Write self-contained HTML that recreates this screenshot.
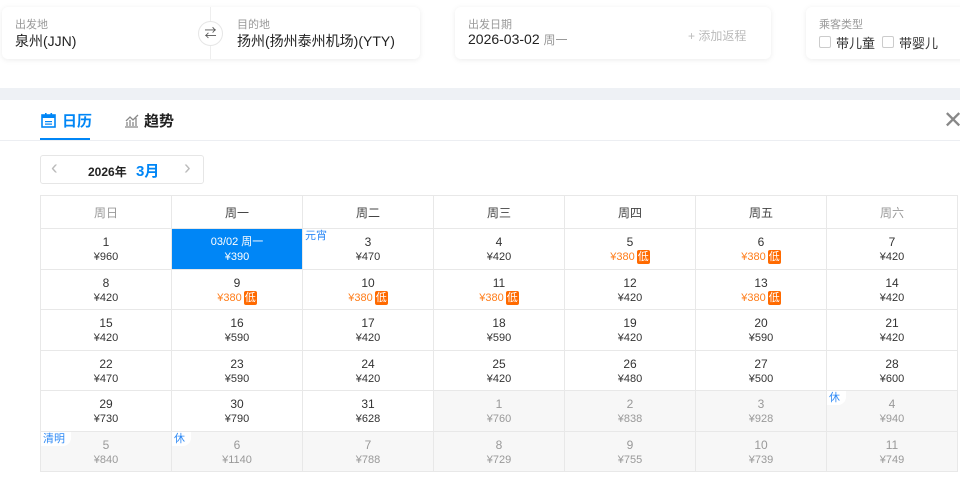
<!DOCTYPE html>
<html><head><meta charset="utf-8"><style>
*{margin:0;padding:0;box-sizing:border-box}
body{width:960px;height:478px;overflow:hidden;background:#fff;font-family:"Liberation Sans","Noto Sans CJK SC",sans-serif;position:relative;color:#333}
.card{position:absolute;background:#fff;border-radius:6px;box-shadow:0 1px 6px rgba(0,0,0,.08)}
.lbl{position:absolute;font-size:11px;color:#999}
.val{position:absolute;font-size:14px;color:#222}
.band{position:absolute;left:0;top:88px;width:960px;height:12px;background:#eef1f5}
.panel{position:absolute;left:0;top:100px;width:960px;height:378px;background:#fff}
table{position:absolute;left:40px;top:195px;border-collapse:collapse;table-layout:fixed}
td,th{width:131px;border:1px solid #e8e8e8;text-align:center;position:relative}
th{height:33px;font-weight:normal;font-size:12px;color:#444}
td{height:40.5px;font-size:12px;line-height:15px;color:#333;padding-top:6px;vertical-align:top}
td .p{font-size:11px;line-height:15px;color:#333}
td.o .p{color:#ff7d1a}
.low{display:inline-block;background:#ff6a00;color:#fff;font-size:11px;line-height:14px;padding:0 1px;border-radius:2px;margin-left:2px;vertical-align:top}
td.g{background:#f7f7f7;color:#999}
td.g .p{color:#999}
td.sel{background:#0086f6;color:#fff;font-size:11px}
td.sel .p{color:#fff}
.tag{position:absolute;left:0;top:0;background:#fff;color:#2f8af5;font-size:11px;line-height:14px;padding:0 6px 0 2px;border-radius:0 0 8px 0}
</style></head><body>
<div class="card" style="left:2px;top:7px;width:418px;height:52px">
 <div class="lbl" style="left:13px;top:9px">出发地</div>
 <div class="val" style="left:13px;top:24px">泉州(JJN)</div>
 <div style="position:absolute;left:208px;top:0;width:1px;height:52px;background:#eee"></div>
 <div style="position:absolute;left:196px;top:14px;width:25px;height:25px;border-radius:50%;background:#fff;border:1px solid #e6e6e6;font-size:12px;text-align:center;line-height:23px;color:#555">⇄</div>
 <div class="lbl" style="left:235px;top:9px">目的地</div>
 <div class="val" style="left:235px;top:24px">扬州(扬州泰州机场)(YTY)</div>
</div>
<div class="card" style="left:455px;top:7px;width:316px;height:52px">
 <div class="lbl" style="left:13px;top:9px">出发日期</div>
 <div class="val" style="left:13px;top:24px">2026-03-02 <span style="font-size:12px;color:#999">周一</span></div>
 <div style="position:absolute;left:233px;top:20px;font-size:12px;color:#bbb">+ 添加返程</div>
</div>
<div class="card" style="left:806px;top:7px;width:170px;height:52px">
 <div class="lbl" style="left:13px;top:9px">乘客类型</div>
 <div style="position:absolute;left:13px;top:29px;width:12px;height:12px;border:1px solid #ccc;border-radius:2px"></div>
 <div style="position:absolute;left:30px;top:26px;font-size:13px">带儿童</div>
 <div style="position:absolute;left:76px;top:29px;width:12px;height:12px;border:1px solid #ccc;border-radius:2px"></div>
 <div style="position:absolute;left:93px;top:26px;font-size:13px">带婴儿</div>
</div>
<div class="band"></div>
<div class="panel">
 <div style="position:absolute;left:0;top:40px;width:960px;height:1px;background:#eceef2"></div>
 <svg style="position:absolute;left:41px;top:13px" width="15" height="15" viewBox="0 0 15 15"><rect x="1" y="2" width="13" height="12" fill="none" stroke="#0086f6" stroke-width="1.6"/><rect x="1" y="2" width="13" height="3" fill="#0086f6"/><rect x="4" y="0" width="1.6" height="3" fill="#0086f6"/><rect x="9.5" y="0" width="1.6" height="3" fill="#0086f6"/><rect x="4" y="8" width="7" height="1.2" fill="#0086f6"/><rect x="4" y="10.5" width="7" height="1.2" fill="#0086f6"/></svg>
 <div style="position:absolute;left:62px;top:10px;font-size:15px;font-weight:bold;color:#0086f6">日历</div>
 <div style="position:absolute;left:40px;top:38px;width:50px;height:2px;background:#0086f6"></div>
 <svg style="position:absolute;left:124px;top:13px" width="15" height="15" viewBox="0 0 15 15"><path d="M1 14h13M3 13V9M6 13V7M9 13V9M12 13V5M2 8l4-4 3 3 5-5" fill="none" stroke="#888" stroke-width="1.3"/></svg>
 <div style="position:absolute;left:144px;top:10px;font-size:15px;font-weight:bold;color:#222">趋势</div>
 <div style="position:absolute;left:943px;top:9px;font-size:24px;color:#888;line-height:24px;font-weight:300">✕</div>
 <div style="position:absolute;left:40px;top:55px;width:164px;height:29px;border:1px solid #e6e6e6;border-radius:3px">
  <span style="position:absolute;left:10px;top:1px;color:#bbb;font-size:20px">‹</span>
  <span style="position:absolute;left:47px;top:7px;font-size:12px;font-weight:bold;color:#222">2026年</span>
  <span style="position:absolute;left:95px;top:4px;font-size:15px;font-weight:bold;color:#0086f6">3月</span>
  <span style="position:absolute;left:143px;top:1px;color:#bbb;font-size:20px">›</span>
 </div>
</div>
<table>
<tr><th style="color:#999">周日</th><th>周一</th><th>周二</th><th>周三</th><th>周四</th><th>周五</th><th style="color:#999">周六</th></tr>
<tr><td>1<div class="p">¥960</div></td><td class="sel">03/02 周一<div class="p">¥390</div></td><td><span class="tag">元宵</span>3<div class="p">¥470</div></td><td>4<div class="p">¥420</div></td><td class="o">5<div class="p">¥380<span class="low">低</span></div></td><td class="o">6<div class="p">¥380<span class="low">低</span></div></td><td>7<div class="p">¥420</div></td></tr>
<tr><td>8<div class="p">¥420</div></td><td class="o">9<div class="p">¥380<span class="low">低</span></div></td><td class="o">10<div class="p">¥380<span class="low">低</span></div></td><td class="o">11<div class="p">¥380<span class="low">低</span></div></td><td>12<div class="p">¥420</div></td><td class="o">13<div class="p">¥380<span class="low">低</span></div></td><td>14<div class="p">¥420</div></td></tr>
<tr><td>15<div class="p">¥420</div></td><td>16<div class="p">¥590</div></td><td>17<div class="p">¥420</div></td><td>18<div class="p">¥590</div></td><td>19<div class="p">¥420</div></td><td>20<div class="p">¥590</div></td><td>21<div class="p">¥420</div></td></tr>
<tr><td>22<div class="p">¥470</div></td><td>23<div class="p">¥590</div></td><td>24<div class="p">¥420</div></td><td>25<div class="p">¥420</div></td><td>26<div class="p">¥480</div></td><td>27<div class="p">¥500</div></td><td>28<div class="p">¥600</div></td></tr>
<tr><td>29<div class="p">¥730</div></td><td>30<div class="p">¥790</div></td><td>31<div class="p">¥628</div></td><td class="g">1<div class="p">¥760</div></td><td class="g">2<div class="p">¥838</div></td><td class="g">3<div class="p">¥928</div></td><td class="g"><span class="tag">休</span>4<div class="p">¥940</div></td></tr>
<tr><td class="g"><span class="tag">清明</span>5<div class="p">¥840</div></td><td class="g"><span class="tag">休</span>6<div class="p">¥1140</div></td><td class="g">7<div class="p">¥788</div></td><td class="g">8<div class="p">¥729</div></td><td class="g">9<div class="p">¥755</div></td><td class="g">10<div class="p">¥739</div></td><td class="g">11<div class="p">¥749</div></td></tr>
</table>
</body></html>
